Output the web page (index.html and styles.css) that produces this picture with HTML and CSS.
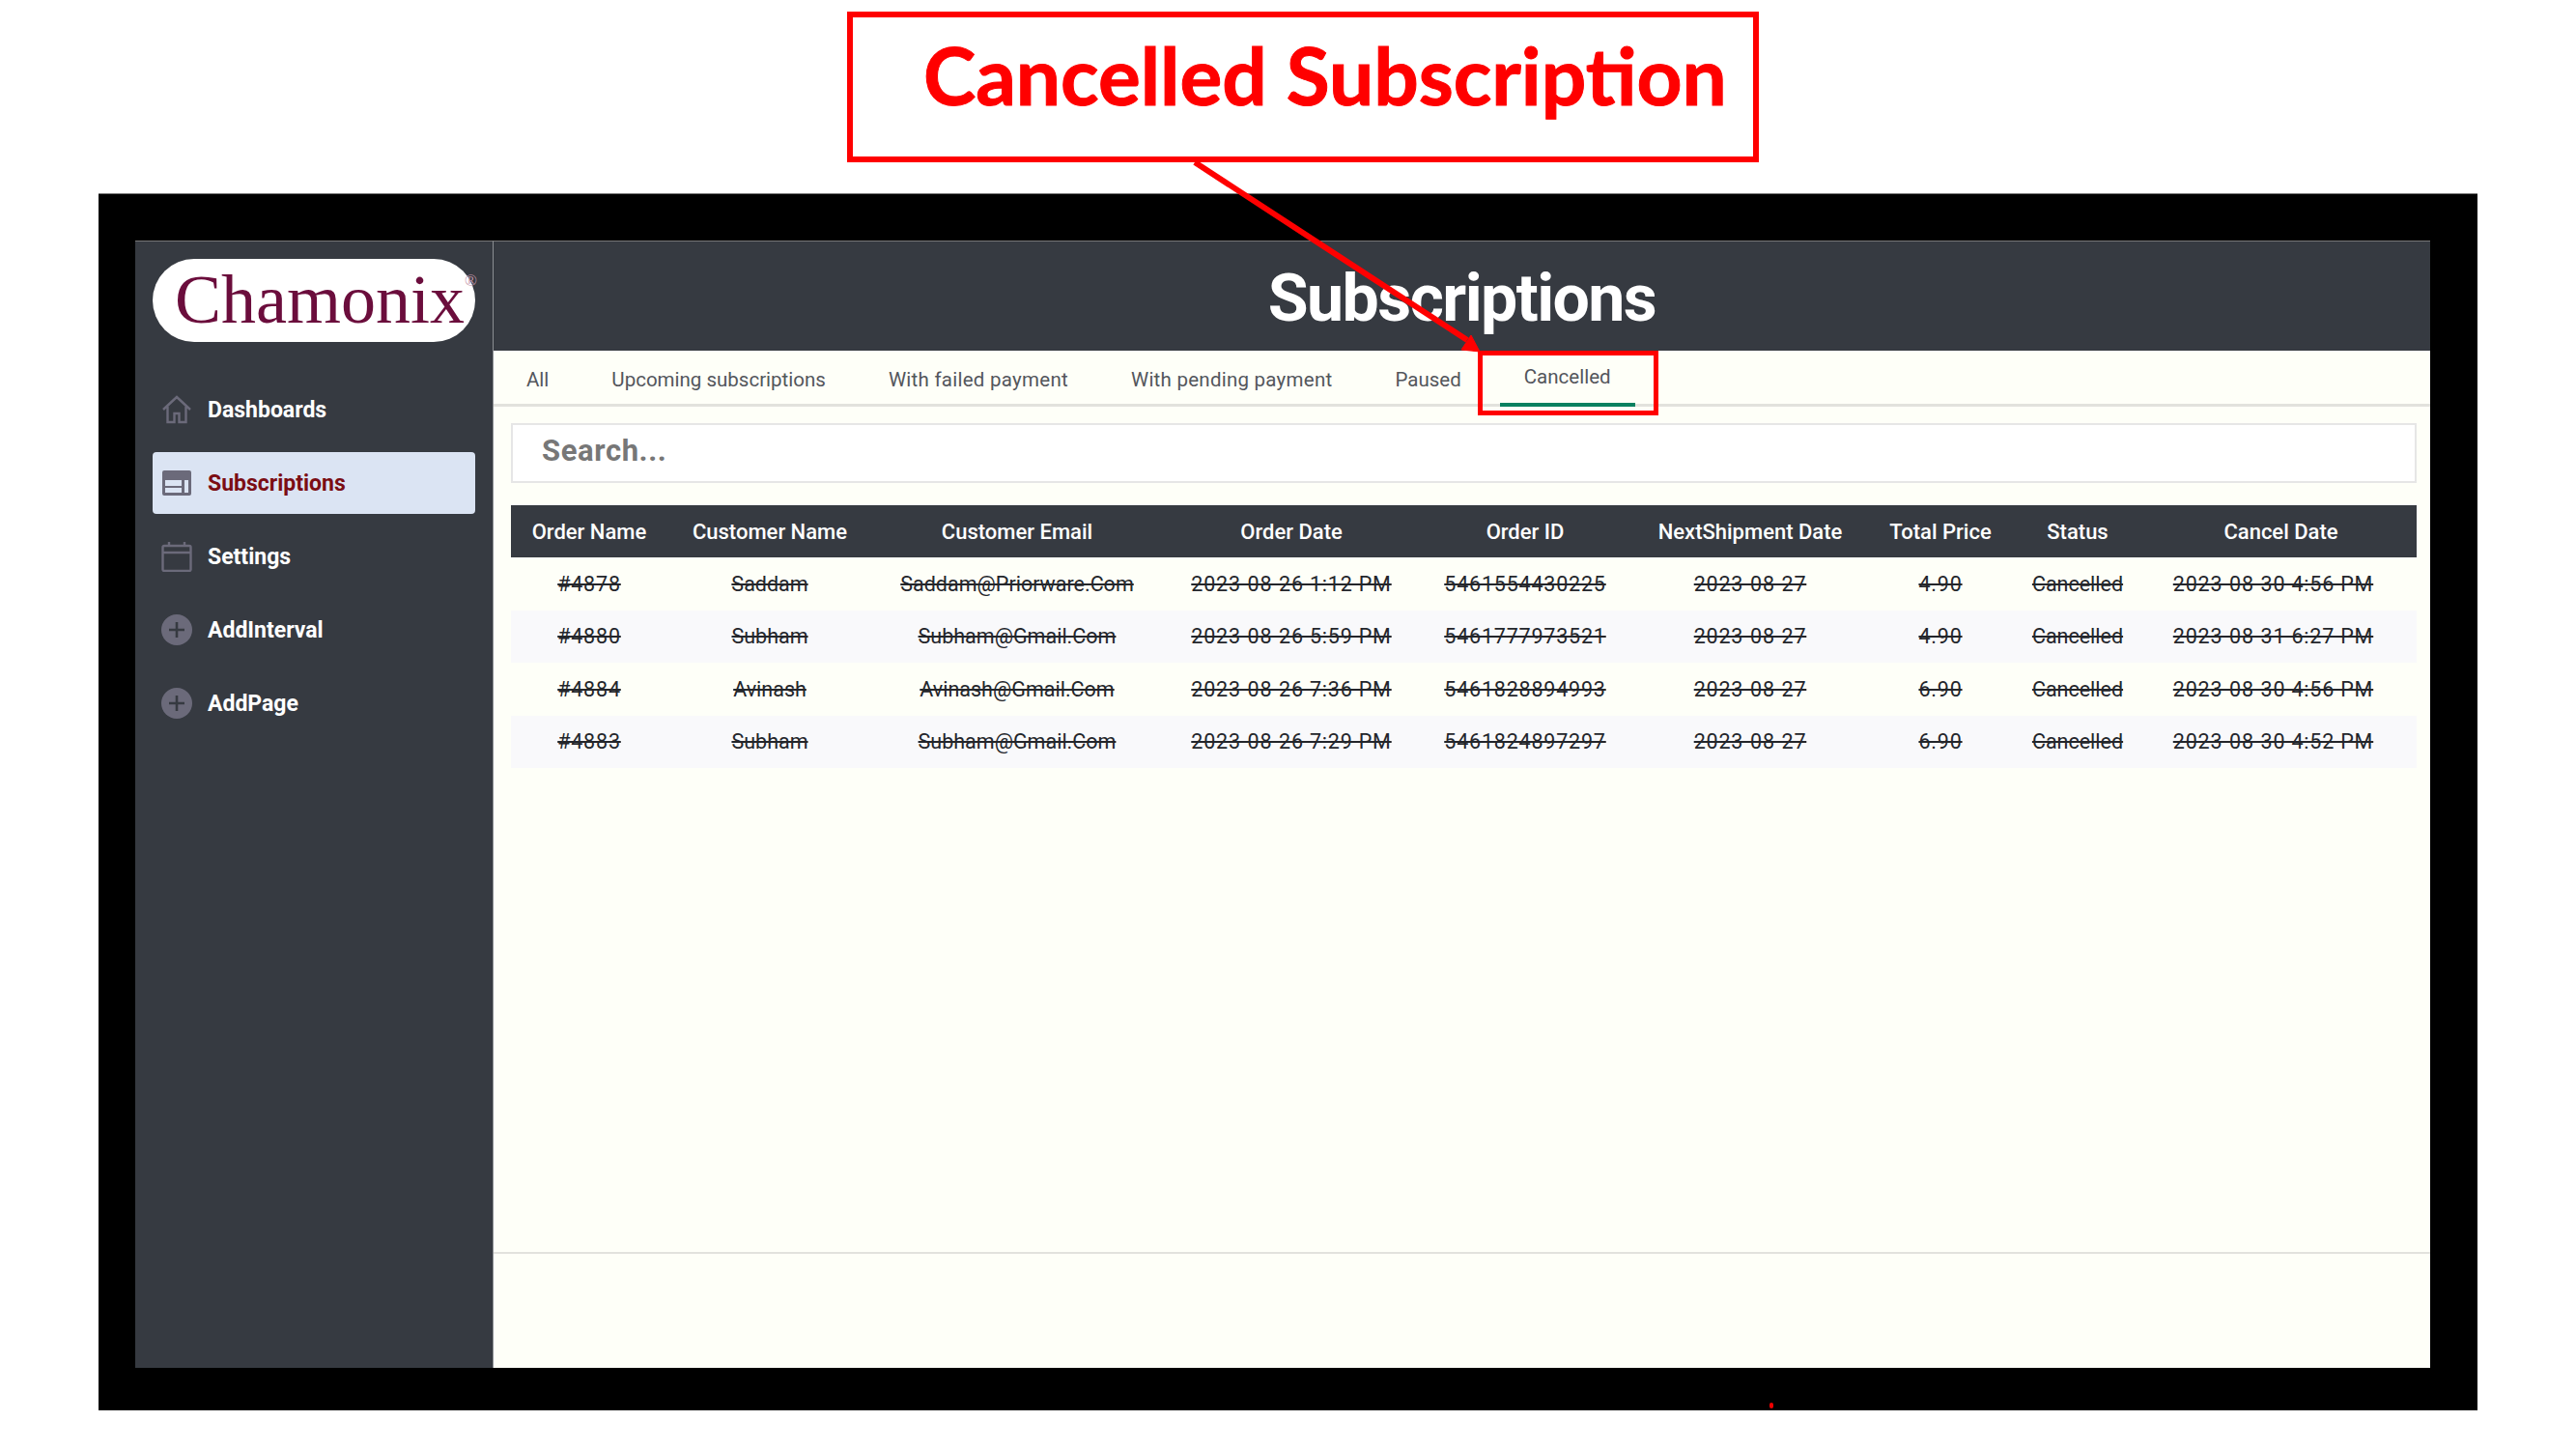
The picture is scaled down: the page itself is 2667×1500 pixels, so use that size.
FILE: index.html
```html
<!DOCTYPE html>
<html lang="en">
<head>
  <meta charset="UTF-8">
  <title>Cancelled Subscription</title>
  <link rel="stylesheet" href="styles.css">
</head>
<body>
  <div class="callout">
    <h1 class="callout-text">Cancelled Subscription</h1>
  </div>

  <div class="frame">
    <div class="app">
      <aside class="sidebar">
        <div class="logo">Chamonix<span class="logo-mark">®</span></div>
        <nav class="nav">
          <a class="nav-item">
            <svg class="nav-icon" viewBox="0 0 32 32"><path d="M2 16 16 3l14 13M6.500 13v16h7v-9h5v9h7V13" fill="none" stroke="currentColor" stroke-width="2.400"/></svg>
            Dashboards
          </a>
          <a class="nav-item active">
            <svg class="nav-icon" viewBox="0 0 32 32"><path fill-rule="evenodd" d="M3 3h26a2 2 0 0 1 2 2v22a2 2 0 0 1-2 2H3a2 2 0 0 1-2-2V5a2 2 0 0 1 2-2zm1 10v6h17v-6zm0 8v5h17v-5zm20-8v13h4V13z" fill="currentColor"/></svg>
            Subscriptions
          </a>
          <a class="nav-item">
            <svg class="nav-icon" viewBox="0 0 32 32"><path d="M3 5h26a1.500 1.500 0 0 1 1.500 1.500v23A1.500 1.500 0 0 1 29 31H3a1.500 1.500 0 0 1-1.500-1.500v-23A1.500 1.500 0 0 1 3 5zM1.500 12h29M8 1v4M24 1v4" fill="none" stroke="currentColor" stroke-width="2.400"/></svg>
            Settings
          </a>
          <a class="nav-item">
            <svg class="nav-icon" viewBox="0 0 32 32"><circle cx="16" cy="16" r="16" fill="currentColor"/><path d="M16 8v16M8 16h16" stroke="#363a41" stroke-width="2.600"/></svg>
            AddInterval
          </a>
          <a class="nav-item">
            <svg class="nav-icon" viewBox="0 0 32 32"><circle cx="16" cy="16" r="16" fill="currentColor"/><path d="M16 8v16M8 16h16" stroke="#363a41" stroke-width="2.600"/></svg>
            AddPage
          </a>
        </nav>
      </aside>

      <main class="main">
        <header class="page-head">Subscriptions</header>
        <div class="tabs">
          <a class="tab">All</a>
          <a class="tab tab-upcoming">Upcoming subscriptions</a>
          <a class="tab tab-failed">With failed payment</a>
          <a class="tab tab-pending">With pending payment</a>
          <a class="tab tab-paused">Paused</a>
          <a class="tab tab-active">Cancelled</a>
        </div>
        <div class="content">
          <input class="search" type="text" placeholder="Search...">
          <table class="orders">
            <colgroup>
              <col class="c1"><col class="c2"><col class="c3"><col class="c4"><col class="c5"><col class="c6"><col class="c7"><col class="c8"><col class="c9">
            </colgroup>
            <thead>
              <tr>
                <th>Order Name</th><th>Customer Name</th><th>Customer Email</th><th>Order Date</th><th>Order ID</th><th>NextShipment Date</th><th>Total Price</th><th>Status</th><th>Cancel Date</th>
              </tr>
            </thead>
            <tbody>
              <tr>
                <td class="num">#4878</td><td>Saddam</td><td>Saddam@Priorware.Com</td><td class="num">2023-08-26 1:12 PM</td><td class="num">5461554430225</td><td class="num">2023-08-27</td><td class="num">4.90</td><td>Cancelled</td><td class="num">2023-08-30 4:56 PM</td>
              </tr>
              <tr>
                <td class="num">#4880</td><td>Subham</td><td>Subham@Gmail.Com</td><td class="num">2023-08-26 5:59 PM</td><td class="num">5461777973521</td><td class="num">2023-08-27</td><td class="num">4.90</td><td>Cancelled</td><td class="num">2023-08-31 6:27 PM</td>
              </tr>
              <tr>
                <td class="num">#4884</td><td>Avinash</td><td>Avinash@Gmail.Com</td><td class="num">2023-08-26 7:36 PM</td><td class="num">5461828894993</td><td class="num">2023-08-27</td><td class="num">6.90</td><td>Cancelled</td><td class="num">2023-08-30 4:56 PM</td>
              </tr>
              <tr>
                <td class="num">#4883</td><td>Subham</td><td>Subham@Gmail.Com</td><td class="num">2023-08-26 7:29 PM</td><td class="num">5461824897297</td><td class="num">2023-08-27</td><td class="num">6.90</td><td>Cancelled</td><td class="num">2023-08-30 4:52 PM</td>
              </tr>
            </tbody>
          </table>
        </div>
        <div class="foot"></div>
      </main>
    </div>
  </div>

  <!-- red annotations drawn over the screenshot -->
  <svg class="arrow" width="2667" height="1500" viewBox="0 0 2667 1500">
    <path d="M1237 168 1519 352" fill="none"/>
    <path class="arrow-head" d="M1532 364 1513 362 1523 347z"/>
  </svg>
  <div class="tab-mark"></div>
  <div class="red-dot"></div>
</body>
</html>
```

FILE: styles.css
```css
* {
  box-sizing: border-box;
}
html, body {
  margin: 0;
  height: 1500px;
  overflow: hidden;
}
body {
  background: white;
  font-family: Roboto, Arial, sans-serif;
  color: #2b2d33;
}

/* callout on top */
.callout {
  width: 944px;
  height: 156px;
  margin: 12px 0 32px 877px;
  border: 6px solid #f00;
  background: white;
}
.callout-text {
  margin: 0;
  padding: 14px 0 0 73px;
  font-family: Lato, Arial, sans-serif;
  font-size: 82px;
  line-height: 90px;
  font-weight: 700;
  -webkit-text-stroke: 1px #f00;
  color: #f00;
  white-space: nowrap;
}

/* black frame */
.frame {
  width: 2463px;
  height: 1260px;
  margin-left: 102px;
  padding: 48px 49px 44px 38px;
  background: black;
  border-top: 1px solid #777;
}
.app {
  display: flex;
  height: 100%;
  background: #fefff8;
}

/* sidebar */
.sidebar {
  width: 371px;
  padding: 18px 18px 0;
  background: #363a41;
  border-right: 1px solid #8b8e92;
  border-top: 1px solid #777;
}
.logo {
  position: relative;
  height: 86px;
  padding: 2px 0 0 23px;
  background: white;
  border-radius: 43px;
  font-family: "Liberation Serif", serif;
  font-size: 72px;
  line-height: 80px;
  color: #6b0d3c;
}
.logo-mark {
  position: absolute;
  top: 13px;
  right: -2px;
  font-size: 17px;
  line-height: 20px;
  color: #c498ac;
}
.nav {
  display: flex;
  flex-direction: column;
  gap: 12px;
  margin-top: 38px;
}
.nav-item {
  display: flex;
  align-items: center;
  gap: 16px;
  height: 64px;
  padding-left: 9px;
  border-radius: 4px;
  font-size: 23px;
  font-weight: 700;
  color: white;
}
.nav-item.active {
  background: #dbe4f3;
  color: #7b0d14;
}
.nav-icon {
  width: 32px;
  height: 32px;
  color: #6b6a7a;
}

/* main area */
.main {
  flex: 1;
  display: flex;
  flex-direction: column;
}
.page-head {
  height: 114px;
  padding-top: 19px;
  background: #363a41;
  border-top: 1px solid #777;
  text-align: center;
  font-size: 68px;
  line-height: 80px;
  font-weight: 700;
  letter-spacing: -1.600px;
  color: white;
}
.tabs {
  display: flex;
  height: 58px;
  padding-left: 10px;
  border-bottom: 3px solid #e2e2dd;
}
.tab {
  padding: 16px 24px 0;
  font-size: 20.500px;
  line-height: 28px;
  color: #53565c;
  white-space: nowrap;
}
.tab-upcoming {
  margin-left: 17px;
}
.tab-failed {
  margin-left: 17px;
  letter-spacing: 0.260px;
}
.tab-pending {
  margin-left: 17px;
  letter-spacing: 0.250px;
}
.tab-paused {
  margin-left: 17px;
}
.tab-active {
  height: 58px;
  margin-left: 16px;
  padding: 13px 25px 0;
  border-bottom: 4px solid #0a8060;
}

.content {
  height: 877px;
  padding: 17px 14px 0 18px;
  border-bottom: 2px solid #e2e2dd;
}
.search {
  display: block;
  width: 100%;
  height: 62px;
  padding: 0 30px 6px;
  border: 2px solid #e6e6e6;
  background: white;
  font-family: Roboto, Arial, sans-serif;
  font-size: 31px;
  font-weight: 700;
  letter-spacing: 0.600px;
}
.search::placeholder {
  color: #777;
  opacity: 1;
}

/* table */
.orders {
  width: 100%;
  margin-top: 23px;
  border-collapse: collapse;
  table-layout: fixed;
}
.c1 { width: 162px; }
.c2 { width: 212px; }
.c3 { width: 300px; }
.c4 { width: 268px; }
.c5 { width: 216px; }
.c6 { width: 250px; }
.c7 { width: 144px; }
.c8 { width: 140px; }
.c9 { width: 281px; }
.orders th {
  height: 54px;
  background: #363a41;
  font-size: 22px;
  font-weight: 500;
  color: white;
  white-space: nowrap;
}
.orders td {
  height: 54.500px;
  padding-top: 1px;
  font-size: 21.500px;
  text-align: center;
  text-decoration: line-through;
  white-space: nowrap;
  color: #24262b;
}
.orders td.num {
  letter-spacing: 0.800px;
}
.orders td:last-child {
  padding-right: 17px;
}
.orders tbody tr:nth-child(even) {
  background: #f9f9fb;
}

/* annotations */
.arrow {
  position: absolute;
  top: 0;
  left: 0;
  pointer-events: none;
}
.arrow path {
  stroke: #f00;
  stroke-width: 6;
}
.arrow .arrow-head {
  fill: #f00;
  stroke-width: 1;
}
.tab-mark {
  position: absolute;
  left: 1530px;
  top: 363px;
  width: 187px;
  height: 67px;
  border: 5px solid #f00;
}
.red-dot {
  position: absolute;
  left: 1832px;
  top: 1452px;
  width: 4px;
  height: 6px;
  border-radius: 2px;
  background: #e00;
}
```
